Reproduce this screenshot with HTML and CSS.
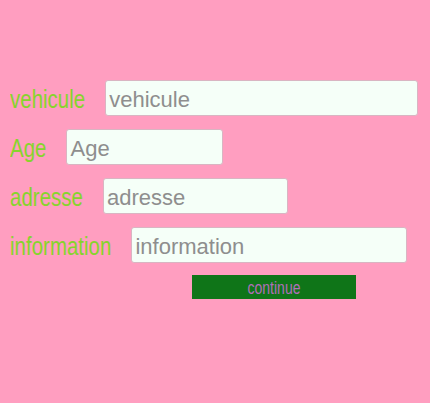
FILE: index.html
```html
<!DOCTYPE html>
<html>
<head>
<meta charset="utf-8">
<link rel="stylesheet" href="styles.css">
</head>
<body>
<form class="form">
  <div class="row"><label class="label"><span class="tall">vehicule</span></label><input class="field w-veh" placeholder="vehicule"></div>
  <div class="row"><label class="label"><span class="tall">Age</span></label><input class="field w-age" placeholder="Age"></div>
  <div class="row"><label class="label"><span class="tall">adresse</span></label><input class="field w-adr" placeholder="adresse"></div>
  <div class="row"><label class="label"><span class="tall">information</span></label><input class="field w-info" placeholder="information"></div>
  <div class="actions"><button type="button" class="btn"><span class="tall">continue</span></button></div>
</form>
</body>
</html>
```
FILE: styles.css
```css
html, body {
  margin: 0;
  padding: 0;
  background: #ff9ec0;
  height: 100%;
}
body {
  font-family: "Liberation Sans", Arial, sans-serif;
}
.form {
  display: flex;
  flex-direction: column;
  gap: 13px;
  padding: 80px 0 0 10px;
}
.row {
  display: flex;
  align-items: center;
  gap: 20px;
  height: 36px;
}
.label {
  flex-shrink: 0;
  color: #86d42c;
  font-size: 20.5px;
  line-height: 36px;
  padding-top: 2px;
}
.tall {
  display: inline-block;
  transform: scaleY(1.25);
}
.field {
  flex-shrink: 0;
  box-sizing: border-box;
  height: 36px;
  border: 1px solid #d9b5c2;
  border-radius: 3px;
  background: #f5fff8;
  font-family: "Liberation Sans", Arial, sans-serif;
  font-size: 22px;
  padding: 4px 3px 0;
  color: #333;
  outline: none;
}
.field::placeholder {
  color: #8e8e8e;
}
.w-veh { width: 313px; }
.w-age { width: 157px; }
.w-adr { width: 185px; }
.w-info { width: 276px; }
.actions {
  display: flex;
  padding-left: 182px;
  margin-top: -1px;
}
.btn {
  width: 164px;
  height: 24px;
  border: none;
  border-radius: 0;
  background: #0f7518;
  color: #b06fb8;
  font-family: "Liberation Sans", Arial, sans-serif;
  font-size: 14px;
  line-height: 24px;
  padding: 1px 0 0;
}
```
